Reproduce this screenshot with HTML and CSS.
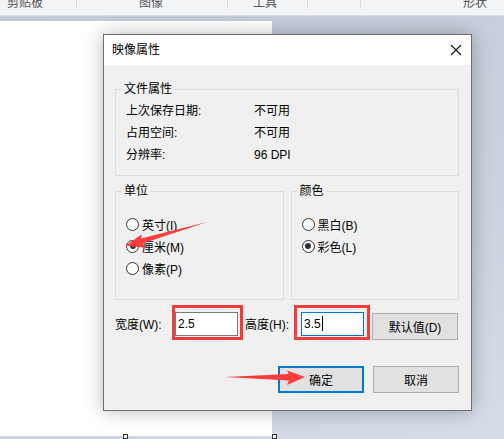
FILE: index.html
```html
<!DOCTYPE html>
<html lang="zh-CN">
<head>
    <meta charset="UTF-8">
    <title>映像属性</title>
    <link rel="stylesheet" href="styles.css">
</head>
<body>
    <div class="ribbon">
        <div class="ribbon-group g-clip">剪贴板</div>
        <div class="ribbon-group g-image">图像</div>
        <div class="ribbon-group g-tools">工具</div>
        <div class="ribbon-group g-brush"></div>
        <div class="ribbon-group g-shape">形状</div>
    </div>

    <div class="workspace">
        <div class="canvas">
            <span class="handle handle-left"></span>
            <span class="handle handle-right"></span>
        </div>
    </div>

    <div class="dialog">
        <div class="title-bar">
            <span class="title">映像属性</span>
            <svg class="close" width="12" height="12" viewBox="0 0 12 12">
                <path d="M1 1 L11 11 M11 1 L1 11" stroke="#111" stroke-width="1.1" fill="none"/>
            </svg>
        </div>
        <div class="dialog-body">
            <fieldset class="group">
                <legend>文件属性</legend>
                <div class="info-row"><span class="info-label">上次保存日期:</span><span>不可用</span></div>
                <div class="info-row"><span class="info-label">占用空间:</span><span>不可用</span></div>
                <div class="info-row"><span class="info-label">分辨率:</span><span>96 DPI</span></div>
            </fieldset>

            <div class="group-row">
                <fieldset class="group option-group">
                    <legend>单位</legend>
                    <div class="radio"><span class="dot"></span>英寸(I)</div>
                    <div class="radio"><span class="dot checked"></span>厘米(M)</div>
                    <div class="radio"><span class="dot"></span>像素(P)</div>
                </fieldset>
                <fieldset class="group option-group">
                    <legend>颜色</legend>
                    <div class="radio"><span class="dot"></span>黑白(B)</div>
                    <div class="radio"><span class="dot checked"></span>彩色(L)</div>
                </fieldset>
            </div>

            <div class="size-row">
                <span class="size-label w-label">宽度(W):</span>
                <span class="mark mark-w"><span class="field">2.5</span></span>
                <span class="size-label h-label">高度(H):</span>
                <span class="mark mark-h"><span class="field focused">3.5<i class="caret"></i></span></span>
                <button class="btn btn-default">默认值(D)</button>
            </div>

            <div class="button-row">
                <button class="btn btn-ok">确定</button>
                <button class="btn">取消</button>
            </div>
        </div>
    </div>

    <svg class="arrows" width="504" height="439" viewBox="0 0 504 439">
        <g transform="translate(207 222) rotate(163.7)">
            <polygon points="0,0 68,-2.6 66,-7.5 85,0 66,6.5 68,2.6" fill="#ff3b3b"/>
        </g>
        <g transform="translate(225 377)">
            <polygon points="0,0 64,-3 62,-6.5 80,0 62,8 64,3.5" fill="#ff3b3b"/>
        </g>
    </svg>
</body>
</html>
```

FILE: styles.css
```css
body {
    margin: 0;
    width: 504px;
    height: 439px;
    overflow: hidden;
    position: relative;
    font-family: "Liberation Sans", "Noto Sans CJK SC", sans-serif;
    font-size: 12px;
    color: #000;
    background: linear-gradient(160deg, #c3cbda 0%, #c9d1de 55%, #d6dce8 100%);
}

/* ribbon strip cut off at the top */
.ribbon {
    display: flex;
    height: 15px;
    background: #f3f4f6;
    border-bottom: 1px solid #dadde3;
    overflow: hidden;
}
.ribbon-group {
    height: 12px;
    line-height: 12px;
    margin-top: -3px;
    padding-top: 0;
    color: #555;
    border-right: 1px solid #dcdcdc;
    box-sizing: border-box;
}
.g-clip {
    width: 77px;
    padding-left: 7px;
}
.g-image {
    width: 151px;
    padding-left: 62px;
}
.g-tools {
    width: 80px;
    padding-left: 25px;
}
.g-brush {
    width: 53px;
}
.g-shape {
    border-right: none;
    padding-left: 102px;
}

.workspace {
    padding-top: 5px;
}
.canvas {
    position: relative;
    width: 272px;
    height: 415px;
    background: #fff;
}
.handle {
    position: absolute;
    top: 413px;
    width: 3px;
    height: 3px;
    background: #fff;
    border: 1px solid #333;
}
.handle-left {
    left: 123px;
}
.handle-right {
    left: 272px;
}

/* dialog */
.dialog {
    position: absolute;
    left: 103px;
    top: 34px;
    width: 367px;
    height: 375px;
    border: 1px solid #6e6e6e;
    background: #f0f0f0;
    box-shadow: 0 0 18px rgba(0, 0, 0, 0.28);
}
.title-bar {
    height: 30px;
    background: #fff;
    display: flex;
    align-items: center;
    justify-content: space-between;
    padding: 0 9px 0 8px;
}
.title {
    font-size: 12px;
    line-height: 30px;
}
.close {
    display: block;
}
.dialog-body {
    padding: 16px 12px 0 11px;
}

.group {
    margin: 0;
    border: 1px solid #dcdcdc;
    padding: 3px 0 9px 10px;
    min-width: 0;
}
.group legend {
    padding: 0 2px;
    margin-left: -4px;
    line-height: 16px;
    color: #000;
}
.info-row {
    display: flex;
    height: 22px;
    line-height: 22px;
}
.info-label {
    width: 128px;
}

.group-row {
    display: flex;
    gap: 7px;
    margin-top: 7px;
}
.option-group {
    width: 158px;
    padding: 14px 0 20px 10px;
}
.radio {
    display: flex;
    align-items: center;
    height: 22px;
}
.dot {
    width: 11px;
    height: 11px;
    border: 1px solid #333;
    border-radius: 50%;
    background: #fff;
    margin-right: 3px;
    display: flex;
    align-items: center;
    justify-content: center;
}
.dot.checked::after {
    content: "";
    width: 6px;
    height: 6px;
    border-radius: 50%;
    background: #333;
}

.size-row {
    display: flex;
    align-items: flex-start;
    margin-top: 5px;
}
.size-label {
    line-height: 20px;
    margin-top: 10px;
}
.w-label {
    width: 57px;
}
.h-label {
    width: 49px;
    margin-left: 2px;
}
.mark {
    display: block;
    border: 3px solid #f23c3c;
}
.mark-w {
    padding: 4px 2px 1px 0;
}
.mark-h {
    padding: 4px 3px 1px 4px;
}
.field {
    display: block;
    width: 59px;
    height: 22px;
    line-height: 22px;
    padding-left: 2px;
    border: 1px solid #7a7a7a;
    background: #fff;
}
.field.focused {
    border-color: #0078d7;
}
.caret {
    display: inline-block;
    width: 1px;
    height: 15px;
    background: #000;
    vertical-align: -3px;
    margin-left: 1px;
}

.btn {
    width: 86px;
    height: 27px;
    margin: 0;
    padding: 0;
    font-family: inherit;
    font-size: 12px;
    color: #000;
    background: #e1e1e1;
    border: 1px solid #adadad;
}
.btn-default {
    margin-left: 2px;
    margin-top: 8px;
}
.button-row {
    display: flex;
    justify-content: flex-end;
    gap: 9px;
    margin-top: 26px;
}
.btn-ok {
    border: 2px solid #0078d7;
}

.arrows {
    position: absolute;
    left: 0;
    top: 0;
    pointer-events: none;
}
```
